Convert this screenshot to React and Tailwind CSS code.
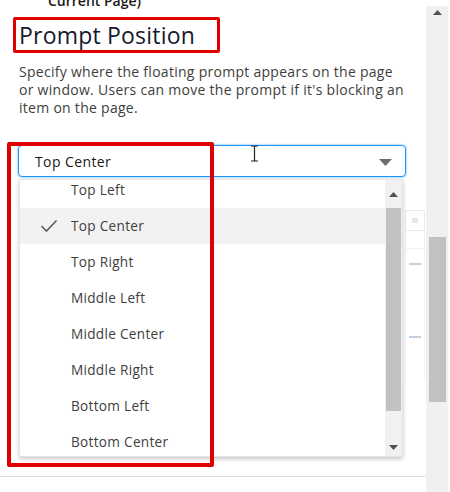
import React from "react";

const options = [
  "Top Left",
  "Top Center",
  "Top Right",
  "Middle Left",
  "Middle Center",
  "Middle Right",
  "Bottom Left",
  "Bottom Center",
];

const Check = () => (
  <svg width="18" height="14" viewBox="0 0 18 14" className="text-[#5c5c5c]">
    <polyline points="1.5,7 6.5,12 16.5,1.5" fill="none" stroke="currentColor" strokeWidth="1.6" />
  </svg>
);

const App = () => {
  const selected = "Top Center";

  return (
    <div className="relative w-[450px] h-[492px] overflow-hidden bg-white flex font-['Open_Sans','Noto_Sans',sans-serif]">
      {/* main column */}
      <div className="relative w-[426px] h-full">
        <div className="-mt-[8px] pl-[48px] text-[14px] font-semibold text-[#181818] leading-[18px]">
          Current Page)
        </div>

        <h2 className="mt-[10px] pl-[19px] text-[23px] leading-[30px] text-[#16192e] tracking-[0.2px]">
          Prompt Position
        </h2>

        <p className="mt-[13px] ml-[19px] whitespace-nowrap text-[14px] leading-[18px] tracking-[0.28px] text-[#3e3e3c]">
          Specify where the floating prompt appears on the page
          <br />
          or window. Users can move the prompt if it's blocking an
          <br />
          item on the page.
        </p>

        {/* select */}
        <div className="mt-[28px] ml-[18px] w-[388px] h-[32px] rounded-[4px] border border-[#1b96ff] shadow-[0_0_2px_#1b96ff] flex items-center justify-between pl-[16px] pr-[13px]">
          <span className="text-[14px] tracking-[0.4px] text-[#181818]">{selected}</span>
          <svg width="13" height="7" viewBox="0 0 13 7" className="mt-[3px]">
            <polygon points="0,0 13,0 6.5,7" fill="#706e6b" />
          </svg>
        </div>

        {/* faint page content behind list */}
        <div className="ml-[405px] mt-[33px] w-[20px] flex flex-col opacity-70">
          <div className="h-[21px] border border-[#e5e5e5] flex items-center justify-center">
            <div className="w-[6px] h-[5px] bg-[#dcdcdc]" />
          </div>
          <div className="h-[18px] border-x border-b border-[#ececec]" />
          <div className="h-[130px] border-x border-[#f0f0f0] flex flex-col items-center pt-[14px] gap-[71px]">
            <div className="w-[12px] h-[2px] bg-[#a8bdd2]" />
            <div className="w-[12px] h-[2px] bg-[#a8bdd2]" />
          </div>
        </div>

        {/* bottom divider */}
        <div className="absolute left-0 right-0 top-[476px] h-px bg-[#dedede]" />

        {/* dropdown list */}
        <div className="absolute left-[19px] top-[179px] w-[384px] h-[278px] bg-white rounded-b-[3px] shadow-[0_2px_4px_rgba(0,0,0,0.22)] border border-[#e5e5e5] overflow-hidden flex">
          <div className="flex-1 overflow-hidden">
            <ul className="-mt-[8px]">
              {options.map((o) => (
                <li
                  key={o}
                  className={`h-[36px] flex items-center text-[13.6px] tracking-[0.3px] text-[#3e3e3c] ${
                    o === selected ? "bg-[#f3f2f2]" : ""
                  }`}
                >
                  <span className="w-[51px] flex justify-end pr-[13px]">
                    {o === selected && <Check />}
                  </span>
                  {o}
                </li>
              ))}
            </ul>
          </div>
          <div className="w-[17px] bg-[#f1f1f1] flex flex-col items-center">
            <div className="h-[28px] flex items-center">
              <svg width="9" height="5" viewBox="0 0 9 5">
                <polygon points="0,5 9,5 4.5,0" fill="#505050" />
              </svg>
            </div>
            <div className="w-[15px] h-[203px] bg-[#c1c1c1]" />
            <div className="flex-1 flex items-end pb-[6px]">
              <svg width="9" height="5" viewBox="0 0 9 5">
                <polygon points="0,0 9,0 4.5,5" fill="#505050" />
              </svg>
            </div>
          </div>
        </div>

        {/* I-beam cursor */}
        <svg className="absolute left-[250px] top-[145px]" width="9" height="17" viewBox="0 0 9 17">
          <path d="M1 1h2.5q1 0 1 1v13q0 1 -1 1H1M8 1H5.5q-1 0 -1 1v13q0 1 1 1H8" fill="none" stroke="#222" strokeWidth="1.2" />
        </svg>

        {/* annotation boxes */}
        <div className="absolute left-[13px] top-[17px] w-[207px] h-[36px] border-[3px] border-[#e10000] rounded-[2px]" />
        <div className="absolute left-[7px] top-[142px] w-[207px] h-[325px] border-[4px] border-[#e10000] rounded-[2px]" />
      </div>

      {/* page scrollbar */}
      <div className="mt-[6px] w-[22px] bg-[#f0f0f0] flex flex-col items-center">
        <div className="h-[12px] flex items-center">
          <svg width="9" height="5" viewBox="0 0 9 5">
            <polygon points="0,5 9,5 4.5,0" fill="#505050" />
          </svg>
        </div>
        <div className="mt-[219px] w-[17px] h-[165px] bg-[#c1c1c1]" />
      </div>
    </div>
  );
};

export default App;
